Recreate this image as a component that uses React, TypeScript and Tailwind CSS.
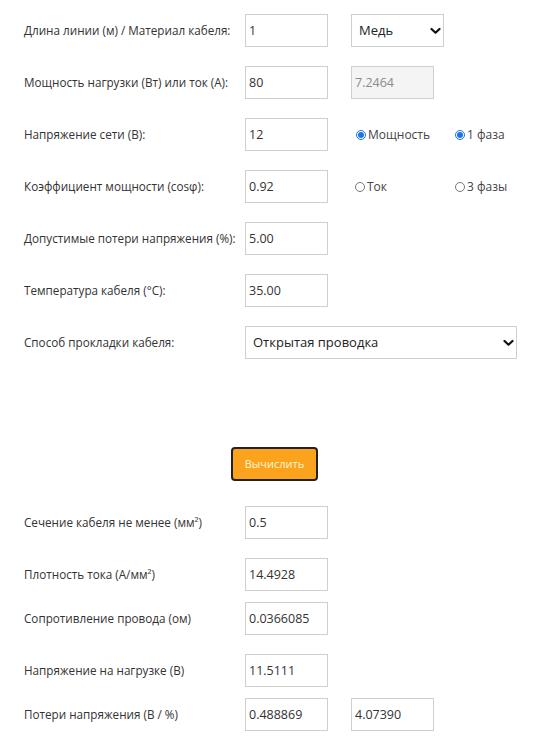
import React from "react";

const font = { fontFamily: '"Open Sans", "Noto Sans", Arial, sans-serif' };

function Chevron() {
  return (
    <svg
      className="pointer-events-none absolute right-[3px] top-1/2 -translate-y-1/2"
      width="11"
      height="7"
      viewBox="0 0 11 7"
      fill="none"
    >
      <path d="M1.5 1.5 L5.5 5.2 L9.5 1.5" stroke="#111" strokeWidth="2.2" strokeLinecap="round" strokeLinejoin="round" />
    </svg>
  );
}

function Field({ value, disabled = false, className = "" }: { value: string; disabled?: boolean; className?: string }) {
  return (
    <input
      readOnly
      value={value}
      className={
        "h-[33px] w-[83px] border border-[#cfcfcf] px-[3px] text-[12.5px] outline-none " +
        (disabled ? "bg-[#f4f4f4] text-[#8a8a8a] " : "bg-white text-[#333] ") +
        className
      }
      style={font}
    />
  );
}

function Radio({ checked, label }: { checked: boolean; label: string }) {
  return (
    <label className="flex items-center text-[12px] text-[#444]">
      <span
        className={
          "mr-[2px] flex h-[10px] w-[10px] items-center justify-center rounded-full border " +
          (checked ? "border-[#1a73e8] bg-white" : "border-[#777] bg-white")
        }
      >
        {checked && <span className="h-[6px] w-[6px] rounded-full bg-[#1a73e8]" />}
      </span>
      {label}
    </label>
  );
}

function Row({ label, children, mb = "mb-[19px]" }: { label: string; children?: React.ReactNode; mb?: string }) {
  return (
    <div className={"flex h-[33px] items-center " + mb}>
      <div className="w-[221px] shrink-0 whitespace-nowrap text-[11.7px] text-[#333]">{label}</div>
      {children}
    </div>
  );
}

export default function App() {
  return (
    <div className="min-h-[746px] w-[546px] bg-white pl-[24px] pt-[14px]" style={font}>
      <Row label="Длина линии (м) / Материал кабеля:">
        <Field value="1" />
        <div className="relative ml-[23px] h-[33px] w-[93px]">
          <select
            className="h-full w-full appearance-none border border-[#cfcfcf] bg-white pl-[7px] text-[13px] text-[#222] outline-none"
            style={font}
            defaultValue="Медь"
          >
            <option>Медь</option>
            <option>Алюминий</option>
          </select>
          <Chevron />
        </div>
      </Row>
      <Row label="Мощность нагрузки (Вт) или ток (А):">
        <Field value="80" />
        <Field value="7.2464" disabled className="ml-[23px]" />
      </Row>
      <Row label="Напряжение сети (В):">
        <Field value="12" />
        <div className="ml-[28px] w-[99px]">
          <Radio checked label="Мощность" />
        </div>
        <Radio checked label="1 фаза" />
      </Row>
      <Row label="Коэффициент мощности (cosφ):">
        <Field value="0.92" />
        <div className="ml-[27px] w-[100px]">
          <Radio checked={false} label="Ток" />
        </div>
        <Radio checked={false} label="3 фазы" />
      </Row>
      <Row label="Допустимые потери напряжения (%):">
        <Field value="5.00" />
      </Row>
      <Row label="Температура кабеля (°C):">
        <Field value="35.00" />
      </Row>
      <Row label="Способ прокладки кабеля:" mb="mb-0">
        <div className="relative h-[33px] w-[272px]">
          <select
            className="h-full w-full appearance-none border border-[#cfcfcf] bg-white pl-[7px] text-[13px] text-[#222] outline-none"
            style={font}
            defaultValue="Открытая проводка"
          >
            <option>Открытая проводка</option>
            <option>Скрытая проводка</option>
          </select>
          <Chevron />
        </div>
      </Row>

      <div className="flex justify-center pr-[24px] pt-[88px] pb-[25px]">
        <button
          className="ml-[3px] h-[34px] w-[87px] rounded-[4px] border-2 border-[#222] bg-[#fba31c] text-[11px] text-[#fff6d8]"
          style={font}
        >
          Вычислить
        </button>
      </div>

      <Row label="Сечение кабеля не менее (мм²)">
        <Field value="0.5" />
      </Row>
      <Row label="Плотность тока (А/мм²)" mb="mb-[11px]">
        <Field value="14.4928" />
      </Row>
      <Row label="Сопротивление провода (ом)">
        <Field value="0.0366085" />
      </Row>
      <Row label="Напряжение на нагрузке (В)" mb="mb-[11px]">
        <Field value="11.5111" />
      </Row>
      <Row label="Потери напряжения (В / %)" mb="mb-0">
        <Field value="0.488869" />
        <Field value="4.07390" className="ml-[23px]" />
      </Row>
    </div>
  );
}
